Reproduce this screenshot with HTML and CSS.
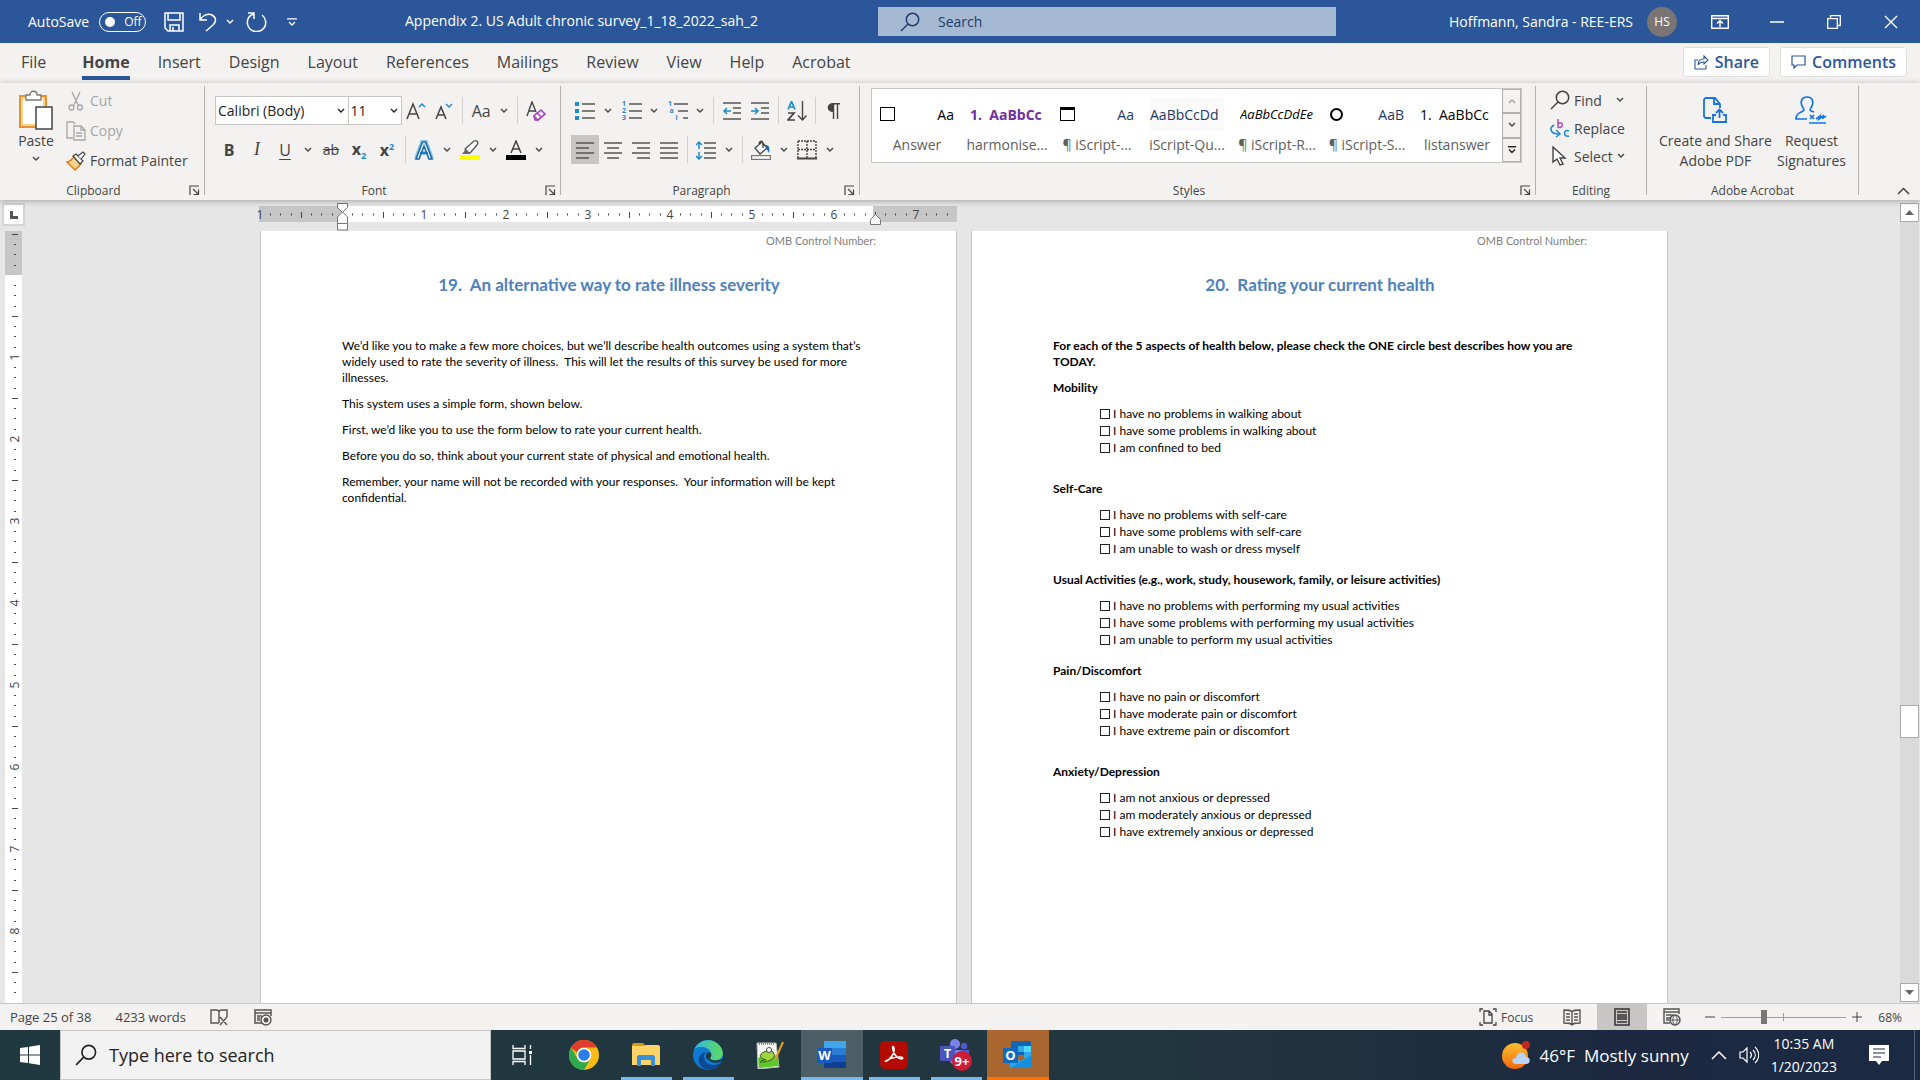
FILE: index.html
```
<!DOCTYPE html>
<html lang="en">
<head>
    <meta charset="UTF-8">
    <meta name="viewport" content="width=device-width, initial-scale=1.0">
    <title>Appendix 2. US Adult chronic survey_1_18_2022_sah_2</title>
    <link rel="stylesheet" href="styles.css">
</head>
<body>
    <!-- shared icons -->
    <svg class="sprite" aria-hidden="true">
        <symbol id="chev" viewBox="0 0 8 6"><path d="M1 1l3 3 3-3" fill="none" stroke="currentColor" stroke-width="1.4"/></symbol>
        <symbol id="launch" viewBox="0 0 11 11"><path d="M1 10V1h9M4 4l5 5M9.500 4.500v5h-5" fill="none" stroke="currentColor" stroke-width="1.200"/></symbol>
        <symbol id="lens" viewBox="0 0 20 20"><path d="M1 19l7-7" fill="none" stroke="currentColor" stroke-width="1.500"/><circle cx="12.500" cy="7.500" r="6.200" fill="none" stroke="currentColor" stroke-width="1.500"/></symbol>
    </svg>

    <header class="titlebar">
        <div class="quick">
            <label class="autosave" for="autosave">AutoSave</label>
            <span class="toggle"><input type="checkbox" id="autosave"><span>Off</span></span>
            <button class="quick-btn" aria-label="Save"><svg width="20" height="20" viewBox="0 0 20 20"><path d="M1 1h18v18H4l-3-3zM4 1v7h12V1M6 19v-6h9v6M9 19v-4" fill="none" stroke="#fff" stroke-width="1.500"/></svg></button>
            <button class="quick-btn undo" aria-label="Undo"><svg width="20" height="20" viewBox="0 0 20 20"><path d="M2 1v7h7M2 8c3-5 8-7 12-5 5 3 4 7 1 10l-7 6" fill="none" stroke="#fff" stroke-width="1.500"/></svg><svg width="8" height="6"><use href="#chev"/></svg></button>
            <button class="quick-btn" aria-label="Redo"><svg width="22" height="20" viewBox="0 0 22 20"><path d="M2 1h6v6M8 2C0 4 0 13 4 17c4 4 11 3 14-1 3-4 2-10-2-13" fill="none" stroke="#fff" stroke-width="1.500"/></svg></button>
            <button class="quick-btn more" aria-label="Customize"><svg width="10" height="8" viewBox="0 0 10 8"><path d="M0 .8h10M2 4l3 3 3-3" fill="none" stroke="#fff" stroke-width="1.300"/></svg></button>
        </div>
        <div class="doc-title">Appendix 2. US Adult chronic survey_1_18_2022_sah_2</div>
        <div class="title-search"><svg width="20" height="20"><use href="#lens"/></svg><input type="text" placeholder="Search" aria-label="Search"></div>
        <div class="account"><span>Hoffmann, Sandra - REE-ERS</span><span class="avatar">HS</span></div>
        <div class="window-btns">
            <button aria-label="Ribbon display"><svg width="18" height="14" viewBox="0 0 18 14"><path d="M.7.7h16.600v12.600H.7zM1 3.500h16M9 12V6M6 8.500l3-3 3 3" fill="none" stroke="#fff" stroke-width="1.400"/></svg></button>
            <button aria-label="Minimize"><svg width="14" height="2"><path d="M0 1h14" stroke="#fff" stroke-width="1.500"/></svg></button>
            <button aria-label="Restore"><svg width="14" height="14" viewBox="0 0 14 14"><path d="M.7 3.700h9.600v9.600H.7zM3.500 3.500V.7h9.800v9.800h-3" fill="none" stroke="#fff" stroke-width="1.300"/></svg></button>
            <button aria-label="Close"><svg width="14" height="14" viewBox="0 0 14 14"><path d="M1 1l12 12M13 1L1 13" stroke="#fff" stroke-width="1.400"/></svg></button>
        </div>
    </header>

    <nav class="tabs">
        <button class="file">File</button>
        <button class="active">Home</button>
        <button>Insert</button>
        <button>Design</button>
        <button>Layout</button>
        <button>References</button>
        <button>Mailings</button>
        <button>Review</button>
        <button>View</button>
        <button>Help</button>
        <button>Acrobat</button>
        <div class="tab-actions">
            <button><svg width="15" height="15" viewBox="0 0 15 15"><path d="M4 5H1v9h11v-4M4 10c0-4 2-6 6-6V1l4 4-4 4V7c-3 0-5 1-6 3z" fill="none" stroke="#2b579a" stroke-width="1.100"/></svg>Share</button>
            <button><svg width="15" height="14" viewBox="0 0 15 14"><path d="M1 1h13v9H6l-3 3v-3H1z" fill="none" stroke="#2b579a" stroke-width="1.200"/></svg>Comments</button>
        </div>
    </nav>

    <section class="ribbon">
        <div class="group clipboard">
            <div class="group-body">
                <button class="big paste">
                    <svg width="36" height="40" viewBox="0 0 36 40"><path d="M2 6h26v31H2z" fill="#fff" stroke="#e8912d" stroke-width="2"/><path d="M4 8h22v27H4z" fill="none" stroke="#fbd58c" stroke-width="2"/><path d="M8 10V5h4c0-5 7-5 7 0h4v5z" fill="#fff" stroke="#7a7a7a" stroke-width="1.300"/><path d="M18 17h16v22H18z" fill="#fff" stroke="#444" stroke-width="1.500"/></svg>
                    <span>Paste</span>
                    <svg class="below" width="8" height="6"><use href="#chev"/></svg>
                </button>
                <div class="stack">
                    <button class="off"><svg width="20" height="20" viewBox="0 0 20 20"><path d="M6 1l6 13M14 1L8 14" stroke="#a6a6a6" stroke-width="1.300"/><circle cx="5.500" cy="16.500" r="2.500" fill="none" stroke="#a6a6a6" stroke-width="1.300"/><circle cx="14" cy="16.500" r="2.500" fill="none" stroke="#a6a6a6" stroke-width="1.300"/></svg>Cut</button>
                    <button class="off"><svg width="20" height="20" viewBox="0 0 20 20"><path d="M7 17H1V1h6l2 2M8 5h7l4 4v10H8zM15 5v4h4M10 12h6M10 15h6" fill="none" stroke="#a6a6a6" stroke-width="1.300"/></svg>Copy</button>
                    <button><svg width="20" height="20" viewBox="0 0 20 20"><path d="M8 6l7 7-6 6c-3-3-6-6-8-8 3 0 5-3 7-5z" fill="#fbd58c" stroke="#e07a10" stroke-width="1.500"/><path d="M7 5l3-2 7 7-3 3z" fill="#fff" stroke="#444" stroke-width="1.200"/><path d="M12 5l5-4 2 2-4 5" fill="#fff" stroke="#444" stroke-width="1.200"/></svg>Format Painter</button>
                </div>
            </div>
            <div class="group-label"><span>Clipboard</span><svg width="11" height="11"><use href="#launch"/></svg></div>
        </div>

        <div class="group font">
            <div class="group-body rows">
                <div class="row">
                    <div class="pick name"><select aria-label="Font"><option>Calibri (Body)</option></select><svg width="8" height="6"><use href="#chev"/></svg></div>
                    <div class="pick size"><select aria-label="Font size"><option>11</option></select><svg width="8" height="6"><use href="#chev"/></svg></div>
                    <button class="ib" aria-label="Grow font"><svg width="20" height="18" viewBox="0 0 20 18"><path d="M1 17L7 2l6 15M3 12h8" fill="none" stroke="#444" stroke-width="1.500"/><path d="M13 5l3-3 3 3" fill="none" stroke="#1e8bcd" stroke-width="1.500"/></svg></button>
                    <button class="ib" aria-label="Shrink font"><svg width="18" height="18" viewBox="0 0 18 18"><path d="M1 17L6 5l5 12M3 13h6" fill="none" stroke="#444" stroke-width="1.500"/><path d="M11 2l3 3 3-3" fill="none" stroke="#1e8bcd" stroke-width="1.500"/></svg></button>
                    <i class="sep"></i>
                    <button class="ib case">Aa</button><button class="dd" aria-label="Change case"><svg width="8" height="6"><use href="#chev"/></svg></button>
                    <i class="sep"></i>
                    <button class="ib" aria-label="Clear formatting"><svg width="20" height="20" viewBox="0 0 20 20"><path d="M1 15L6 1l4 10M3 10h7" fill="none" stroke="#444" stroke-width="1.400"/><path d="M8 15l7-6 4 4-7 6H9z" fill="#f3e3f7" stroke="#9a3fae" stroke-width="1.500"/><path d="M8 15l4 4 3-3-4-4z" fill="#fff" stroke="#9a3fae" stroke-width="1.300"/></svg></button>
                </div>
                <div class="row">
                    <button class="ib bold">B</button>
                    <button class="ib italic">I</button>
                    <button class="ib under">U</button><button class="dd" aria-label="Underline style"><svg width="8" height="6"><use href="#chev"/></svg></button>
                    <button class="ib strike">ab</button>
                    <button class="ib script"><span>x<sub>2</sub></span></button>
                    <button class="ib script"><span>x<sup>2</sup></span></button>
                    <i class="sep"></i>
                    <button class="ib" aria-label="Text effects"><svg width="20" height="20" viewBox="0 0 20 20"><path d="M2 19L8 2h4l6 17M6 13h8" fill="none" stroke="#8cc5ee" stroke-width="4"/><path d="M2 19L8.500 2h3L18 19h-3l-5-13-5 13zM6 13h8" fill="#fff" stroke="#1867ad" stroke-width="1.600"/></svg></button><button class="dd" aria-label="Effects menu"><svg width="8" height="6"><use href="#chev"/></svg></button>
                    <button class="ib" aria-label="Highlight"><svg width="20" height="20" viewBox="0 0 20 20"><path d="M5 9l9-8c3-1 5 1 3 4l-7 8H7z" fill="#fff" stroke="#555" stroke-width="1.300"/><path d="M2 14l4-5 4 4-1 1z" fill="#666"/><path d="M0 15h20v5H0z" fill="#ff0"/></svg></button><button class="dd" aria-label="Highlight menu"><svg width="8" height="6"><use href="#chev"/></svg></button>
                    <button class="ib" aria-label="Font color"><svg width="20" height="20" viewBox="0 0 20 20"><path d="M5 13l5-12 5 12M6 9h8" fill="none" stroke="#444" stroke-width="1.500"/><path d="M0 15h20v5H0z"/></svg></button><button class="dd" aria-label="Color menu"><svg width="8" height="6"><use href="#chev"/></svg></button>
                </div>
            </div>
            <div class="group-label"><span>Font</span><svg width="11" height="11"><use href="#launch"/></svg></div>
        </div>

        <div class="group paragraph">
            <div class="group-body rows">
                <div class="row">
                    <button class="ib" aria-label="Bullets"><svg width="20" height="20" viewBox="0 0 20 20"><path d="M0 1h4v4H0zM0 8h4v4H0zM0 15h4v4H0z" fill="#1e8bcd"/><path d="M7 3h13M7 10h13M7 17h13" stroke="#555" stroke-width="1.500"/></svg></button><button class="dd" aria-label="Bullets menu"><svg width="8" height="6"><use href="#chev"/></svg></button>
                    <button class="ib" aria-label="Numbering"><span class="digits"><b>1</b><b>2</b><b>3</b></span><svg width="14" height="20" viewBox="0 0 14 20"><path d="M1 3h13M1 10h13M1 17h13" stroke="#555" stroke-width="1.500"/></svg></button><button class="dd" aria-label="Numbering menu"><svg width="8" height="6"><use href="#chev"/></svg></button>
                    <button class="ib" aria-label="Multilevel list"><span class="digits steps"><b>1</b><b>a</b><b>i</b></span><svg width="14" height="20" viewBox="0 0 14 20"><path d="M0 3h14M4 10h10M9 17h5" stroke="#555" stroke-width="1.500"/></svg></button><button class="dd" aria-label="Multilevel menu"><svg width="8" height="6"><use href="#chev"/></svg></button>
                    <i class="sep"></i>
                    <button class="ib" aria-label="Decrease indent"><svg width="18" height="18" viewBox="0 0 18 18"><path d="M0 1h18M10 6h8M10 11h8M0 17h18" stroke="#555" stroke-width="1.500"/><path d="M8 9H1M4 6L1 9l3 3" fill="none" stroke="#1e8bcd" stroke-width="1.500"/></svg></button>
                    <button class="ib" aria-label="Increase indent"><svg width="18" height="18" viewBox="0 0 18 18"><path d="M0 1h18M10 6h8M10 11h8M0 17h18" stroke="#555" stroke-width="1.500"/><path d="M0 9h7M4 6l3 3-3 3" fill="none" stroke="#1e8bcd" stroke-width="1.500"/></svg></button>
                    <i class="sep"></i>
                    <button class="ib" aria-label="Sort"><svg width="20" height="20" viewBox="0 0 20 20"><path d="M1 8.500l3.500-8 3.500 8M2 6h5" fill="none" stroke="#1e8bcd" stroke-width="1.700"/><path d="M1 12h6l-6 7h7" fill="none" stroke="#444" stroke-width="1.700"/><path d="M15.500 0v18M11 14.500l4.500 4.500 4-4.500" fill="none" stroke="#444" stroke-width="1.400"/></svg></button>
                    <i class="sep"></i>
                    <button class="ib" aria-label="Show marks"><svg width="14" height="16" viewBox="0 0 14 16"><path d="M6 0C-1 0-1 9 6 9z" fill="#444"/><path d="M5 .7h8M6.500 0v16M10.500 0v16" stroke="#444" stroke-width="1.400"/></svg></button>
                </div>
                <div class="row">
                    <button class="ib on" aria-label="Align left"><svg width="18" height="18" viewBox="0 0 18 18"><path d="M0 2h18M0 7h13M0 12h18M0 17h13" stroke="#555" stroke-width="1.500"/></svg></button>
                    <button class="ib" aria-label="Center"><svg width="18" height="18" viewBox="0 0 18 18"><path d="M0 2h18M3 7h12M0 12h18M3 17h12" stroke="#555" stroke-width="1.500"/></svg></button>
                    <button class="ib" aria-label="Align right"><svg width="18" height="18" viewBox="0 0 18 18"><path d="M0 2h18M5 7h13M0 12h18M5 17h13" stroke="#555" stroke-width="1.500"/></svg></button>
                    <button class="ib" aria-label="Justify"><svg width="18" height="18" viewBox="0 0 18 18"><path d="M0 2h18M0 7h18M0 12h18M0 17h18" stroke="#555" stroke-width="1.500"/></svg></button>
                    <i class="sep"></i>
                    <button class="ib" aria-label="Line spacing"><svg width="20" height="20" viewBox="0 0 20 20"><path d="M8 3h12M8 8h12M8 13h12M8 18h12" stroke="#555" stroke-width="1.500"/><path d="M3 9V2M0 5l3-3 3 3M3 12v7M0 16l3 3 3-3" fill="none" stroke="#1e8bcd" stroke-width="1.500"/></svg></button><button class="dd" aria-label="Spacing menu"><svg width="8" height="6"><use href="#chev"/></svg></button>
                    <i class="sep"></i>
                    <button class="ib" aria-label="Shading"><svg width="20" height="20" viewBox="0 0 20 20"><path d="M4 8l7-6 5 6-7 6zM8 5c0-5 4-5 4-1v4" fill="#fff" stroke="#444" stroke-width="1.300"/><path d="M14 5c4 0 5 2 4 8l-3-5z" fill="#1867ad"/><path d="M.6 15.600h18.800v3.800H.6z" fill="#fff" stroke="#777" stroke-width="1.200"/></svg></button><button class="dd" aria-label="Shading menu"><svg width="8" height="6"><use href="#chev"/></svg></button>
                    <button class="ib" aria-label="Borders"><svg width="20" height="20" viewBox="0 0 20 20"><path d="M1 1h18v17M1 1v17M10 1v17M1 9.500h18" fill="none" stroke="#444" stroke-width="1.400" stroke-dasharray="2 1"/><path d="M0 18.500h20" stroke="#444" stroke-width="2"/></svg></button><button class="dd" aria-label="Borders menu"><svg width="8" height="6"><use href="#chev"/></svg></button>
                </div>
            </div>
            <div class="group-label"><span>Paragraph</span><svg width="11" height="11"><use href="#launch"/></svg></div>
        </div>

        <div class="group styles">
            <div class="group-body">
                <div class="gallery">
                    <button class="style"><span class="preview gap"><b class="box"></b><span>Aa</span></span><span class="style-name">Answer</span></button>
                    <button class="style"><span class="preview purple">1.&nbsp; AaBbCc</span><span class="style-name">harmonise...</span></button>
                    <button class="style"><span class="preview gap navy"><b class="box cap"></b><span>Aa</span></span><span class="style-name">¶ iScript-...</span></button>
                    <button class="style"><span class="preview navy shade">AaBbCcDd</span><span class="style-name">iScript-Qu...</span></button>
                    <button class="style"><span class="preview slant">AaBbCcDdEe</span><span class="style-name">¶ iScript-R...</span></button>
                    <button class="style"><span class="preview gap navy"><b class="box round"></b><span>AaB</span></span><span class="style-name">¶ iScript-S...</span></button>
                    <button class="style"><span class="preview">1.&nbsp; AaBbCc</span><span class="style-name">listanswer</span></button>
                    <div class="gallery-scroll">
                        <button class="off" aria-label="Previous styles"><svg class="flip" width="8" height="6"><use href="#chev"/></svg></button>
                        <button aria-label="Next styles"><svg width="8" height="6"><use href="#chev"/></svg></button>
                        <button aria-label="More styles"><svg width="8" height="8" viewBox="0 0 8 8"><path d="M0 .7h8M1 3.500l3 3 3-3" fill="none" stroke="#222" stroke-width="1.400"/></svg></button>
                    </div>
                </div>
            </div>
            <div class="group-label"><span>Styles</span><svg width="11" height="11"><use href="#launch"/></svg></div>
        </div>

        <div class="group editing">
            <div class="group-body">
                <div class="stack">
                    <button><svg width="20" height="20"><use href="#lens"/></svg>Find<svg class="far" width="8" height="6"><use href="#chev"/></svg></button>
                    <button><svg width="20" height="20" viewBox="0 0 20 20"><path d="M8 1v9M8 6c5-4 7 4 0 3.500" fill="none" stroke="#b04fc0" stroke-width="1.500"/><path d="M19 13c-6-3-6 7 0 5" fill="none" stroke="#1e8bcd" stroke-width="1.500"/><path d="M4 7c-5 3-4 9 5 9M6 12l4 4-4 3" fill="none" stroke="#1e8bcd" stroke-width="1.500"/></svg>Replace</button>
                    <button><svg width="20" height="20" viewBox="0 0 20 20"><path d="M3 1v15l4-3 3 6 3-1-3-6h5z" fill="#fff" stroke="#444" stroke-width="1.400"/></svg>Select<svg width="8" height="6"><use href="#chev"/></svg></button>
                </div>
            </div>
            <div class="group-label"><span>Editing</span></div>
        </div>

        <div class="group acrobat">
            <div class="group-body">
                <button class="big"><svg width="24" height="26" viewBox="0 0 24 26"><path d="M8 21H3c-1 0-2-1-2-2V3c0-1 1-2 2-2h9l5 6v4M11 1v6h6M13 18h-3v7h13v-7h-3M16.500 21v-8M13 16l3.500-3.500L20 16" fill="none" stroke="#1473e6" stroke-width="1.800"/></svg><span>Create and Share<br>Adobe PDF</span></button>
                <button class="big"><svg width="32" height="28" viewBox="0 0 32 28"><path d="M12 23H1c0-6 4-6 7-8 2-1 0-3-1-5-2-5 0-9 5-9s7 4 5 9c-1 2-3 4-1 5l3 1M14 27h17M15 19l4 4M19 19l-4 4M21 23l4-3-1 3 4-3v2l3-2" fill="none" stroke="#1473e6" stroke-width="1.700"/></svg><span>Request<br>Signatures</span></button>
            </div>
            <div class="group-label"><span>Adobe Acrobat</span></div>
        </div>
        <button class="collapse" aria-label="Collapse ribbon"><svg width="13" height="8" viewBox="0 0 13 8"><path d="M1 7l5.500-5.500L12 7" fill="none" stroke="#444" stroke-width="1.500"/></svg></button>
    </section>

    <main class="workspace">
        <div class="corner"><button aria-label="Tab selector"><svg width="8" height="8"><path d="M1.500 0v6.500H8" fill="none" stroke="#555" stroke-width="3"/></svg></button></div>
        <div class="ruler-row">
            <svg class="hruler" width="700" height="28" viewBox="0 0 700 28">
                <defs>
                    <pattern id="hticks" x="82" width="82" height="16" y="3" patternUnits="userSpaceOnUse">
                        <path d="M10 8.500h1M20 8.500h1M31 8.500h1M51 8.500h1M61 8.500h1M72 8.500h1" stroke="#444" stroke-width="2"/><path d="M41.500 6v6" stroke="#444"/>
                    </pattern>
                </defs>
                <path d="M-1 3h698v16H-1z" fill="#c6c6c6"/>
                <path d="M82 3h531v16H82z" fill="#fff"/>
                <path d="M4 3h693v16H4z" fill="url(#hticks)"/>
                <g class="marks"><text x="0" y="16">1</text><text x="164" y="16">1</text><text x="246" y="16">2</text><text x="328" y="16">3</text><text x="410" y="16">4</text><text x="492" y="16">5</text><text x="574" y="16">6</text><text x="656" y="16">7</text></g>
                <path d="M77.500.5h10v4l-5 5-5-5zM77.500 18v-4l5-5 5 5v13h-10zM77.500 20.500h10M610.500 21.500v-5l5-5 5 5v5z" fill="#fff" stroke="#777"/>
            </svg>
        </div>
        <div class="vruler">
            <svg width="17" height="772" viewBox="0 0 17 772">
                <defs>
                    <pattern id="vticks" y="44" width="17" height="82" patternUnits="userSpaceOnUse">
                        <path d="M10 10v1M10 20v1M10 31v1M10 51v1M10 61v1M10 72v1" stroke="#444" stroke-width="2"/><path d="M7 41.500h6" stroke="#444"/>
                    </pattern>
                </defs>
                <path d="M0 0h17v44H0z" fill="#c6c6c6"/>
                <path d="M0 44h17v728H0z" fill="#fff"/>
                <path d="M0 0h17v772H0z" fill="url(#vticks)"/>
                <g class="marks"><text transform="translate(14 126) rotate(-90)">1</text><text transform="translate(14 208) rotate(-90)">2</text><text transform="translate(14 290) rotate(-90)">3</text><text transform="translate(14 372) rotate(-90)">4</text><text transform="translate(14 454) rotate(-90)">5</text><text transform="translate(14 536) rotate(-90)">6</text><text transform="translate(14 618) rotate(-90)">7</text><text transform="translate(14 700) rotate(-90)">8</text></g>
            </svg>
        </div>
        <div class="pages">
            <article class="page">
                <p class="omb">OMB Control Number:</p>
                <h1>19.&nbsp; An alternative way to rate illness severity</h1>
                <p>We’d like you to make a few more choices, but we’ll describe health outcomes using a system that’s<br>widely used to rate the severity of illness.&nbsp; This will let the results of this survey be used for more<br>illnesses.</p>
                <p>This system uses a simple form, shown below.</p>
                <p>First, we’d like you to use the form below to rate your current health.</p>
                <p>Before you do so, think about your current state of physical and emotional health.</p>
                <p>Remember, your name will not be recorded with your responses.&nbsp; Your information will be kept<br>confidential.</p>
            </article>
            <article class="page">
                <p class="omb">OMB Control Number:</p>
                <h1>20.&nbsp; Rating your current health</h1>
                <p class="strong">For each of the 5 aspects of health below, please check the ONE circle best describes how you are<br>TODAY.</p>
                <fieldset class="spaced">
                    <legend>Mobility</legend>
                    <label><input type="checkbox">I have no problems in walking about</label>
                    <label><input type="checkbox">I have some problems in walking about</label>
                    <label><input type="checkbox">I am confined to bed</label>
                </fieldset>
                <fieldset>
                    <legend>Self-Care</legend>
                    <label><input type="checkbox">I have no problems with self-care</label>
                    <label><input type="checkbox">I have some problems with self-care</label>
                    <label><input type="checkbox">I am unable to wash or dress myself</label>
                </fieldset>
                <fieldset>
                    <legend>Usual Activities (e.g., work, study, housework, family, or leisure activities)</legend>
                    <label><input type="checkbox">I have no problems with performing my usual activities</label>
                    <label><input type="checkbox">I have some problems with performing my usual activities</label>
                    <label><input type="checkbox">I am unable to perform my usual activities</label>
                </fieldset>
                <fieldset class="spaced">
                    <legend>Pain/Discomfort</legend>
                    <label><input type="checkbox">I have no pain or discomfort</label>
                    <label><input type="checkbox">I have moderate pain or discomfort</label>
                    <label><input type="checkbox">I have extreme pain or discomfort</label>
                </fieldset>
                <fieldset>
                    <legend>Anxiety/Depression</legend>
                    <label><input type="checkbox">I am not anxious or depressed</label>
                    <label><input type="checkbox">I am moderately anxious or depressed</label>
                    <label><input type="checkbox">I have extremely anxious or depressed</label>
                </fieldset>
            </article>
        </div>
        <div class="scrollbar">
            <button aria-label="Scroll up"><svg width="9" height="5"><path d="M0 5l4.500-5L9 5z" fill="#666"/></svg></button>
            <div class="track"><div class="thumb"></div></div>
            <button aria-label="Scroll down"><svg width="9" height="5"><path d="M0 0l4.500 5L9 0z" fill="#666"/></svg></button>
        </div>
    </main>

    <footer class="status">
        <span class="count">Page 25 of 38</span>
        <span class="count">4233 words</span>
        <button class="check" aria-label="Proofing"><svg width="18" height="17" viewBox="0 0 18 17"><path d="M9 14H1V1h5c2 0 3 1 3 2v11M9 3c0-1 1-2 3-2h5v7M10 8l7 8M17 8l-7 8" fill="none" stroke="#555" stroke-width="1.400"/></svg></button>
        <button class="check" aria-label="Macro"><svg width="18" height="17" viewBox="0 0 18 17"><path d="M8 14H1V1h16v6M1 4h16M3 7h5M3 9h3M3 11h3" fill="none" stroke="#555" stroke-width="1.500"/><circle cx="12" cy="11" r="5" fill="#f3f2f1" stroke="#555" stroke-width="1.400"/><circle cx="12" cy="11" r="2.500" fill="#555"/></svg></button>
        <div class="views">
            <button class="focus"><svg width="18" height="18" viewBox="0 0 18 18"><path d="M4 1H1v3M14 1h3v3M4 17H1v-3M14 17h3v-3M5 3h5l3 3v9H5zM10 3v4h3" fill="none" stroke="#444" stroke-width="1.300"/></svg>Focus</button>
            <button class="view" aria-label="Read mode"><svg width="18" height="17" viewBox="0 0 18 17"><path d="M9 3C8 1 6 1 1 1v13c5 0 7 0 8 2 1-2 3-2 8-2V1c-5 0-7 0-8 2zv13M3 5h4M3 8h4M3 11h4M11 5h4M11 8h4M11 11h4" fill="none" stroke="#555" stroke-width="1.400"/></svg></button>
            <button class="view on" aria-label="Print layout"><svg width="16" height="18" viewBox="0 0 16 18"><path d="M1 1h14v16H1zM3 4h10M3 7h10M3 9h10M3 11h10M3 14h10" fill="none" stroke="#333" stroke-width="1.500"/></svg></button>
            <button class="view" aria-label="Web layout"><svg width="18" height="18" viewBox="0 0 18 18"><path d="M7 15H1V1h15v5M1 4h15M3 7h7M3 10h4M3 12h3" fill="none" stroke="#555" stroke-width="1.400"/><circle cx="12" cy="12" r="5" fill="#f3f2f1" stroke="#555" stroke-width="1.500"/><path d="M7 12h10M12 7c-3 3-3 7 0 10M12 7c3 3 3 7 0 10" fill="none" stroke="#555"/></svg></button>
        </div>
        <div class="zoom">
            <button aria-label="Zoom out"><svg width="10" height="10"><path d="M0 5h10" stroke="#444"/></svg></button>
            <input type="range" min="0" max="100" value="33" aria-label="Zoom">
            <button aria-label="Zoom in"><svg width="10" height="10"><path d="M0 5h10M5 0v10" stroke="#444"/></svg></button>
            <span>68%</span>
        </div>
    </footer>

    <div class="taskbar">
        <button class="start" aria-label="Start"><svg width="20" height="20" viewBox="0 0 20 20"><path d="M0 3l8-1v7.500H0zM9 1.800L20 0v9.500H9zM0 10.500h8V18l-8-1zM9 10.500h11V20L9 18.200z" fill="#fff"/></svg></button>
        <div class="task-search"><svg width="22" height="22"><use href="#lens"/></svg><input type="text" placeholder="Type here to search" aria-label="Type here to search"></div>
        <button class="app" aria-label="Task view"><svg width="20" height="20" viewBox="0 0 20 20"><path d="M1 0v3.500h12V0M1 6h12v8H1zM1 20v-3.500h12V20M18.500 0v4M18.500 10v10" fill="none" stroke="#fff" stroke-width="1.300"/><path d="M17 6h3v3h-3z" fill="#fff"/></svg></button>
        <button class="app" aria-label="Chrome"><svg width="30" height="30" viewBox="0 0 30 30"><circle cx="15" cy="15" r="15" fill="#f9bc15"/><path d="M2 7.500A15 15 0 0 1 28 7.500H15a7.500 7.500 0 0 0-7 5z" fill="#e33b2e"/><path d="M2 7.500A15 15 0 0 0 15 30l6.500-11.200A7.500 7.500 0 0 1 8.500 18.800z" fill="#2da94f"/><circle cx="15" cy="15" r="7.300" fill="#fff"/><circle cx="15" cy="15" r="5.800" fill="#2b7de9"/></svg></button>
        <button class="app open" aria-label="File Explorer"><svg width="28" height="24" viewBox="0 0 28 24"><path d="M0 2c0-1 1-2 2-2h9l3 3H0z" fill="#d99a0b"/><path d="M0 3h12l2-1h12c1 0 2 1 2 2v18H0z" fill="#fdd267"/><path d="M5 14c0-1 1-2 2-2h14c1 0 2 1 2 2v9h-4v-6H9v6H5z" fill="#3a8fdc"/></svg></button>
        <button class="app open" aria-label="Edge"><svg width="30" height="30" viewBox="0 0 30 30"><defs><linearGradient id="edge1" x2="1"><stop stop-color="#2fb5ea"/><stop offset="1" stop-color="#5fdd5a"/></linearGradient></defs><circle cx="15" cy="15" r="15" fill="#0f7bd0"/><path d="M1 10C5-1 20-3 27 6c4 5 4 12-2 14-4 1-8 0-8-2 2-2 2-6-2-9C10 6 4 6 1 10z" fill="url(#edge1)"/><path d="M13 12c-5 5 0 13 7 13 3 0 5-1 8-2-6 9-17 8-21 2-3-5-1-12 6-13z" fill="#0c4a97"/><path d="M17 18c2-2 2-5-1-6-3 1-4 4-2 7 4 4 10 5 15 2l1-2c-5 2-13 2-13-1z" fill="#20383f"/></svg></button>
        <button class="app" aria-label="Notepad++"><svg width="28" height="28" viewBox="0 0 28 28"><path d="M1 2h19l3 24-21 2z" fill="#f7f7f4" stroke="#bbb"/><path d="M2 17c8-4 14-4 20-1l1 9-20 2z" fill="#5fc52e"/><path d="M4 15c2-5 9-6 13-4l2 4c-4 6-11 6-15 6 2-2 4-2 6-2-3-1-5-2-6-4z" fill="#9ed63b" stroke="#2d5a1c"/><circle cx="13" cy="9" r="2.500" fill="#fff" stroke="#444"/><path d="M3 3h16" stroke="#888" stroke-width="2" stroke-dasharray="1 1"/><path d="M27 1l-8 18" stroke="#e6a11b" stroke-width="2"/></svg></button>
        <button class="app open current" aria-label="Word"><svg width="30" height="28" viewBox="0 0 30 28"><path d="M7 0h22v7H7z" fill="#41a5ee"/><path d="M7 7h22v7H7z" fill="#2b7cd3"/><path d="M7 14h22v7H7z" fill="#185abd"/><path d="M7 21h22v6H7z" fill="#103f91"/><path d="M0 7h15v15H0z" fill="#185abd"/><text class="logo" x="7.500" y="19">W</text></svg></button>
        <button class="app open" aria-label="Acrobat"><svg width="28" height="28" viewBox="0 0 28 28"><rect width="28" height="28" rx="5" fill="#b30b00"/><path d="M6 20c4-1 9-8 8-13-1-3-2-1-1 2 1 4 4 8 8 9 3 0 2-2-1-2-4 0-9 1-12 3-3 1-3 2-2 1z" fill="none" stroke="#fff" stroke-width="1.500"/></svg></button>
        <button class="app open" aria-label="Teams"><svg width="34" height="32" viewBox="0 0 34 32"><circle cx="16" cy="5" r="5" fill="#7b83eb"/><circle cx="25" cy="7" r="3.200" fill="#5059c9"/><path d="M10 11h12v15c-6 2-12-2-12-7z" fill="#7b83eb"/><path d="M22 11h8v9c0 4-5 6-8 4z" fill="#5059c9"/><path d="M1 7h15v15H1z" fill="#4b53bc"/><text class="logo" x="8.500" y="19">T</text><circle cx="23" cy="22" r="10" fill="#cc1c36"/><text class="logo" x="23" y="27">9+</text></svg></button>
        <button class="app open alert" aria-label="Outlook"><svg width="30" height="28" viewBox="0 0 30 28"><path d="M8 0h20v14H8z" fill="#1066b5"/><path d="M15 5h6v6h-6zM21 11h7v6h-7z" fill="#32a9e7"/><path d="M21 5h7v6h-7z" fill="#50d9ff"/><path d="M7 14l11 6 11-7v14H7z" fill="#28a8ea"/><path d="M7 27l22-13v13z" fill="#1490df"/><path d="M0 7h15v15H0z" fill="#0f6cbd"/><text class="logo" x="7.500" y="19">O</text></svg></button>
        <div class="tray">
            <button class="weather"><svg width="28" height="28" viewBox="0 0 28 28"><defs><linearGradient id="sun" y2="1" x2="0"><stop stop-color="#f8c02f"/><stop offset="1" stop-color="#f4680b"/></linearGradient></defs><circle cx="13" cy="15" r="13" fill="url(#sun)"/><path d="M14 23c-5 0-5-6 0-6 1-7 9-7 10-1 5 0 5 7 0 7z" fill="#b9d3f8"/><circle cx="24" cy="4" r="4" fill="#c4261d"/></svg><span>46°F&nbsp; Mostly sunny</span></button>
            <button aria-label="Hidden icons"><svg width="16" height="10" viewBox="0 0 16 10"><path d="M1 9l7-7 7 7" fill="none" stroke="#fff" stroke-width="1.500"/></svg></button>
            <button aria-label="Volume"><svg width="20" height="18" viewBox="0 0 20 18"><path d="M1 6h3l4-4v14l-4-4H1zM11 6c2 2 2 4 0 6M14 4c3 3 3 7 0 10M16 1c5 5 5 11 0 16" fill="none" stroke="#fff" stroke-width="1.200"/></svg></button>
            <button class="clock">10:35 AM<br>1/20/2023</button>
            <button class="notes" aria-label="Notifications"><svg width="20" height="20" viewBox="0 0 20 20"><path d="M0 0h20v16h-7l-3 4-3-4H0z" fill="#fff"/><path d="M4 4h12M4 8h12M4 12h8" stroke="#1b2b42" stroke-width="1.200"/></svg></button>
        </div>
    </div>
</body>
</html>
```

FILE: styles.css
```
* {
    box-sizing: border-box;
}
body {
    margin: 0;
    height: 100vh;
    display: flex;
    flex-direction: column;
    overflow: hidden;
    font-family: "Open Sans", "Noto Sans", sans-serif;
    font-size: 14px;
    color: #444;
    background: #e6e6e6;
}
button, input, select {
    font: inherit;
    color: inherit;
    border: none;
    background: none;
    padding: 0;
    margin: 0;
}
button {
    display: flex;
    align-items: center;
    justify-content: center;
    white-space: nowrap;
}
svg {
    flex: none;
    display: block;
}
.sprite {
    position: absolute;
    width: 0;
    height: 0;
}

/* title bar */
.titlebar {
    display: grid;
    grid-template-columns: 405px 473px minmax(200px, 458px) 1fr auto;
    align-items: center;
    height: 43px;
    background: #2b579a;
    color: #fff;
}
.quick {
    display: flex;
    align-items: center;
    padding-left: 28px;
}
.doc-title {
    padding-bottom: 3px;
}
.toggle {
    display: flex;
    align-items: center;
    gap: 9px;
    width: 47px;
    height: 20px;
    margin: 0 18px 0 10px;
    padding-left: 5px;
    border: 1px solid #fff;
    border-radius: 10px;
    font-size: 12px;
}
.toggle input {
    appearance: none;
    width: 10px;
    height: 10px;
    border-radius: 50%;
    background: #fff;
}
.quick-btn {
    margin-right: 14px;
    gap: 8px;
}
.quick-btn.undo {
    margin-right: 12px;
}
.quick-btn.more {
    margin-left: 5px;
}
.title-search {
    display: flex;
    align-items: center;
    gap: 18px;
    height: 29px;
    padding-left: 22px;
    background: #a6b9d2;
    color: #1e3c6e;
}
.title-search input {
    flex: 1;
    min-width: 0;
}
input::placeholder {
    color: inherit;
    opacity: 1;
}
.account {
    display: flex;
    align-items: center;
    justify-content: flex-end;
    gap: 14px;
    padding-right: 14px;
}
.avatar {
    display: grid;
    place-items: center;
    width: 30px;
    height: 30px;
    border-radius: 50%;
    background: #7a7574;
    font-size: 12px;
}
.window-btns {
    display: flex;
    padding-right: 1px;
}
.window-btns button {
    width: 57px;
    height: 43px;
}

/* tabs */
.tabs {
    display: flex;
    align-items: center;
    height: 40px;
    padding: 0 0 2px 7px;
    background: #f3f2f1;
    font-size: 16px;
}
.tabs > button {
    height: 36px;
    padding: 0 14px;
}
.tabs .file {
    margin-right: 8px;
}
.tabs .active {
    font-weight: bold;
    background: linear-gradient(#2b579a, #2b579a) no-repeat center bottom / 48px 4px;
}
.tab-actions {
    display: flex;
    gap: 10px;
    margin-left: auto;
    padding-right: 13px;
}
.tab-actions button {
    gap: 6px;
    height: 30px;
    padding: 0 10px;
    border: 1px solid #e1dfdd;
    border-radius: 3px;
    background: #fff;
    color: #2b579a;
    font-weight: 600;
}

/* ribbon */
.ribbon {
    display: flex;
    height: 117px;
    padding: 3px 0 5px;
    background: #f3f2f1;
    box-shadow: 0 1px 6px rgba(0, 0, 0, 0.3);
    position: relative;
    z-index: 1;
}
.group {
    display: flex;
    flex-direction: column;
    justify-content: space-between;
    border-right: 1px solid #b3b1af;
}
.group-body {
    display: flex;
}
.group-label {
    display: flex;
    align-items: center;
    gap: 6px;
    height: 10px;
    padding: 0 4px;
    font-size: 12px;
}
.group-label span {
    flex: 1;
    text-align: center;
}
.clipboard {
    width: 205px;
}
.clipboard .group-body {
    padding-left: 18px;
    gap: 12px;
}
.big {
    flex-direction: column;
    justify-content: flex-start;
    gap: 7px;
    line-height: 20px;
}
.paste {
    gap: 1px;
    padding-top: 4px;
}
.below {
    margin-top: 4px;
}
.stack {
    display: flex;
    flex-direction: column;
    align-items: flex-start;
}
.stack button {
    height: 29px;
    gap: 4px;
}
.clipboard .stack {
    gap: 1px;
}
.off {
    color: #a6a6a6;
}
.rows {
    flex-direction: column;
    gap: 10px;
    padding: 10px 10px 0;
}
.row {
    display: flex;
    height: 29px;
    align-items: center;
}
.ib {
    width: 28px;
    height: 29px;
    font-size: 16px;
}
.ib.on {
    background: #c8c6c4;
}
.dd {
    width: 18px;
    height: 29px;
}
.sep {
    width: 1px;
    height: 27px;
    margin: 0 4px;
    background: #d2d0ce;
}
.font {
    width: 356px;
}
.paragraph {
    width: 299px;
}
.pick {
    display: grid;
    grid-template-columns: 1fr auto;
    align-items: center;
    height: 29px;
    padding-right: 3px;
    border: 1px solid #c8c6c4;
    background: #fff;
    color: #222;
}
.name {
    width: 134px;
}
.size {
    width: 55px;
    margin-left: -1px;
}
.pick select {
    appearance: none;
    min-width: 0;
    padding-left: 2px;
    outline: none;
}
.bold {
    font-weight: bold;
}
.italic {
    font-family: "Liberation Serif", serif;
    font-style: italic;
    font-size: 18px;
}
.under {
    text-decoration: underline;
    text-underline-offset: 3px;
}
.strike {
    text-decoration: line-through;
    font-size: 14px;
}
.script {
    font-weight: bold;
}
.script sub, .script sup {
    color: #1e8bcd;
    font-size: 9px;
    line-height: 1;
}
/* list markers drawn beside the numbering icons */
.digits {
    display: flex;
    flex-direction: column;
    width: 7px;
    color: #1e8bcd;
    font-size: 7px;
    line-height: 7px;
}
.steps b:nth-child(2) {
    padding-left: 3px;
}
.steps b:nth-child(3) {
    padding-left: 9px;
}

/* style gallery */
.styles {
    flex: 1;
    min-width: 0;
}
.styles .group-body {
    padding: 2px 13px 0 11px;
}
.gallery {
    display: flex;
    flex: 1;
    height: 75px;
    border: 1px solid #c8c6c4;
    background: #fff;
    min-width: 0;
}
.style {
    flex: 1;
    min-width: 0;
    flex-direction: column;
    gap: 4px;
    padding: 0 8px;
}
.preview {
    display: flex;
    align-items: center;
    width: 100%;
    height: 34px;
    overflow: hidden;
    color: #000;
}
.preview.gap {
    justify-content: space-between;
}
.preview.purple {
    color: #7030a0;
    font-weight: bold;
}
.preview.navy {
    color: #1f3864;
}
.preview.shade {
    background: #fafafa;
}
.preview.slant {
    font-style: italic;
    font-size: 13px;
}
.box {
    flex: none;
    width: 15px;
    height: 14px;
    border: 1px solid #000;
}
.box.cap {
    border-top-width: 3px;
}
.box.round {
    width: 13px;
    height: 13px;
    border-width: 2px;
    border-radius: 50%;
}
.style-name {
    color: #605e5c;
}
.gallery-scroll {
    display: flex;
    flex-direction: column;
    width: 19px;
}
.gallery-scroll button {
    flex: 1;
    border: 1px solid #b3b1af;
    background: #f3f2f1;
}
.flip {
    transform: rotate(180deg);
}
.editing {
    width: 111px;
}
.editing .group-body {
    padding-left: 14px;
}
.editing .stack button {
    height: 28px;
}
.far {
    margin-left: 10px;
}
.acrobat {
    width: 212px;
}
.acrobat .group-body {
    padding: 10px 12px 0;
    justify-content: space-between;
}
.acrobat .big svg {
    height: 28px;
}
.collapse {
    align-self: flex-end;
    justify-content: flex-end;
    width: 61px;
    padding-right: 10px;
}

/* document area */
.workspace {
    flex: 1;
    min-height: 0;
    display: grid;
    grid-template-columns: 28px 1fr 20px;
    grid-template-rows: 31px 1fr;
    overflow: hidden;
}
.corner {
    padding: 3px 0 0 2px;
}
.corner button {
    width: 23px;
    height: 23px;
    border: 2px solid #d4d4d4;
    background: #fff;
}
.ruler-row {
    display: flex;
    justify-content: center;
    padding-top: 3px;
}
.hruler {
    margin-right: 708px;
    overflow: visible;
}
.marks {
    font-size: 12px;
    fill: #444;
    text-anchor: middle;
}
.vruler {
    grid-column: 1;
    padding-left: 5px;
    overflow: hidden;
}
.pages {
    display: flex;
    justify-content: center;
    gap: 14px;
    min-height: 0;
}
.page {
    flex: 0 1 697px;
    padding: 2px 80px 0 81px;
    border: solid #c6c6c6;
    border-width: 0 1px;
    background: #fff;
    color: #000;
    font-family: Lato, sans-serif;
    font-size: 12px;
    line-height: 16px;
    white-space: nowrap;
}
.page p {
    margin: 0 0 10px;
}
.page .omb {
    margin: 0;
    font-size: 11px;
    text-align: right;
    color: #808080;
}
.page h1 {
    margin: 25px 0 42px;
    font-size: 17px;
    line-height: 22px;
    text-align: center;
    color: #4f81bd;
}
.page .strong {
    font-weight: bold;
}
.page fieldset {
    margin: 0 0 15px;
    padding: 0;
    border: none;
}
.page .spaced {
    margin-bottom: 25px;
}
.page legend {
    padding: 0;
    margin-bottom: 9px;
    font-weight: bold;
}
.page label {
    display: flex;
    align-items: center;
    gap: 3px;
    height: 17px;
    padding-left: 47px;
}
.page input {
    appearance: none;
    width: 10px;
    height: 10px;
    border: 1px solid #222;
}
.scrollbar {
    grid-column: 3;
    grid-row: 1 / 3;
    display: flex;
    flex-direction: column;
    padding: 3px 1px 1px 0;
}
.scrollbar button {
    width: 19px;
    height: 19px;
    border: 1px solid #ababab;
    background: #fff;
}
.track {
    flex: 1;
    display: flex;
    flex-direction: column;
    background: #dadada;
}
.track::before {
    content: "";
    flex: 482;
}
.track::after {
    content: "";
    flex: 245;
}
.thumb {
    height: 33px;
    border: 1px solid #ababab;
    background: #fff;
}

/* status bar */
.status {
    display: flex;
    align-items: center;
    height: 27px;
    padding: 0 18px 0 10px;
    border-top: 1px solid #c6c6c6;
    background: #f3f2f1;
    font-size: 12px;
}
.count {
    margin-right: 24px;
    font-size: 13px;
}
.check {
    margin-right: 26px;
}
.views {
    display: flex;
    margin: 0 8px 0 auto;
}
.focus {
    gap: 4px;
    margin-right: 14px;
}
.view {
    width: 50px;
    height: 26px;
}
.view.on {
    background: #c8c6c4;
}
.zoom {
    display: flex;
    align-items: center;
    gap: 6px;
}
.zoom input {
    appearance: none;
    width: 125px;
    height: 14px;
    background: linear-gradient(#a19f9d, #a19f9d) no-repeat center / 100% 1px, linear-gradient(#a19f9d, #a19f9d) no-repeat center / 1px 8px;
}
.zoom input::-webkit-slider-thumb {
    appearance: none;
    width: 6px;
    height: 14px;
    background: #777;
}
.zoom span {
    margin-left: 10px;
}

/* taskbar */
.taskbar {
    display: flex;
    height: 50px;
    background: linear-gradient(90deg, #20383f, #22363f 60%, #1b2840 85%, #1b2a44);
    color: #fff;
}
.start {
    width: 60px;
}
.task-search {
    display: flex;
    align-items: center;
    gap: 12px;
    flex: 0 1 431px;
    padding-left: 14px;
    border: 1px solid #c6c6c6;
    background: #f2f2f2;
    color: #222;
    font-size: 18px;
}
.task-search input {
    flex: 1;
    min-width: 0;
}
.app {
    width: 62px;
}
.open {
    background: linear-gradient(#76b9ed, #76b9ed) no-repeat center bottom / 51px 3px;
}
.open.current {
    background: linear-gradient(#76b9ed, #76b9ed) no-repeat center bottom / 100% 3px, #4d5f66;
}
.open.alert {
    background: linear-gradient(#ff7300, #ff7300) no-repeat center bottom / 100% 3px, #a96630;
}
.logo {
    fill: #fff;
    font-size: 13px;
    font-weight: bold;
    text-anchor: middle;
}
.tray {
    display: flex;
    align-items: center;
    gap: 12px;
    margin-left: auto;
    margin-right: 5px;
    border-right: 1px solid #5c6779;
}
.weather {
    gap: 10px;
    margin-right: 10px;
    font-size: 17px;
}
.clock {
    line-height: 23px;
}
.notes {
    margin: 0 25px 0 43px;
}
.clock + .notes {
    margin-left: 20px;
}
```
